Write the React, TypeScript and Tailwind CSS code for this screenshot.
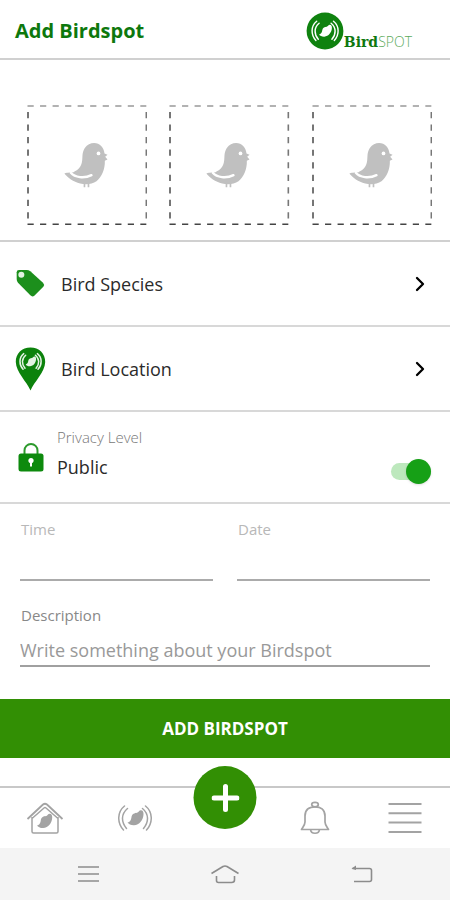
import { useState } from "react";
import type { ReactNode } from "react";
import { ChevronRight } from "lucide-react";

function Bird() {
  return (
    <>
      <path
        fill="currentColor"
        d="M1 94C4 90 18 92 28 90C40 84 52 76 54 56C56 44 53 32 62 18C69 7 79 3 90 3C107 3 119 16 121 34L130 38L123 44L130 52L122 56C123 82 112 106 97 117C84 126 66 128 48 124C28 119 10 106 1 94Z"
      />
      <path d="M20 92C32 106 60 110 82 99" fill="none" stroke="#fff" strokeWidth="7" strokeLinecap="round" />
      <path d="M61 122v13M73 122v13" fill="none" stroke="currentColor" strokeWidth="5" />
      <circle cx="103" cy="34" r="5.5" fill="#fff" />
    </>
  );
}

// simplified bird for the small icons, 16x15 grid
function SmallBird() {
  return (
    <path
      fill="currentColor"
      d="M0 12.500C3 12 3.600 9.500 4 7C4.500 3.800 7.200 3 9.500 2.700C11 2.400 11.500 .2 13.400 .2C15.400 .2 16.200 2 16 4.500C15.700 10 12 15 6.500 15.200C3.500 15.300 1.200 14.200 0 12.500Z"
    />
  );
}

// bird between two pairs of sound waves, drawn on a 34x26 grid
function BirdCall({ stroke = 1.5 }: { stroke?: number }) {
  return (
    <>
      <g fill="none" stroke="currentColor" strokeWidth={stroke} strokeLinecap="round">
        <path d="M6.500 1C-1 7-1 18 5.500 25M9.500 3.500C3 9 3 17 8.500 23.500" />
        <path d="M27.500 1C35 7 35 18 28.500 25M24.500 3.500C31 9 31 17 25.500 23.500" />
      </g>
      <g transform="translate(9.5 5)">
        <SmallBird />
      </g>
    </>
  );
}

function PhotoSlot({ index }: { index: number }) {
  return (
    <button type="button" aria-label={`Add photo ${index}`} className="aspect-square w-full">
      <svg viewBox="0 0 120 120" className="h-full w-full text-[#c0c0c0]" aria-hidden>
        <g fill="none" strokeWidth="1.6" strokeDasharray="6.2 6.3">
          <path d="M.5 1H119" stroke="#999" />
          <path d="M1 7V119" stroke="#555" />
          <path d="M119 7V119" stroke="#777" />
          <path d="M.5 119H119" stroke="#444" />
        </g>
        <g transform="translate(37 37) scale(.333)">
          <Bird />
        </g>
      </svg>
    </button>
  );
}

function LinkRow({ icon, label }: { icon: ReactNode; label: string }) {
  return (
    <button type="button" className="flex h-[85px] w-full items-center border-b-2 border-[#d8d8d8] pl-[15px] pr-[18px] text-left">
      <span className="w-[46px]">{icon}</span>
      <span className="flex-1 text-lg">{label}</span>
      <ChevronRight className="h-6 w-6 text-black" strokeWidth={2.3} aria-hidden />
    </button>
  );
}

function Field({ id, label }: { id: string; label: string }) {
  return (
    <div>
      <label htmlFor={id} className="block pl-px text-[15px] leading-5 text-[#b8b8b8]">{label}</label>
      <input id={id} type="text" className="block h-[42px] w-full border-b-2 border-[#ababab] text-lg outline-none" />
    </div>
  );
}

export default function App() {
  const [isPublic, setIsPublic] = useState(true);

  return (
    <div className="min-h-screen bg-white font-['Open_Sans',sans-serif] text-[#2b2b2b]">
      <header className="flex h-[60px] items-center justify-between border-b-2 border-[#d0d0d0] pl-[15px] pr-[38px] pt-1">
        <h1 className="text-xl font-bold text-[#0d780d]">Add Birdspot</h1>
        <div className="flex items-end">
          <svg viewBox="0 0 38 38" className="h-[38px] w-[38px] text-white" aria-hidden>
            <circle cx="19" cy="19" r="18.4" fill="#0f820f" />
            <g transform="translate(5.5 8.5) scale(.8)">
              <BirdCall stroke={1.8} />
            </g>
          </svg>
          <span className="text-sm leading-4 text-[#5cab5c]">
            <span className="font-['DejaVu_Serif',serif] font-bold text-[#0f780f]">Bird</span>
            <span className="font-light">SPOT</span>
          </span>
        </div>
      </header>

      <main>
        <section className="grid grid-cols-3 gap-[22px] border-b-2 border-[#d0d0d0] pb-[15px] pl-[27px] pr-[18px] pt-[45px]">
          {[1, 2, 3].map((n) => (
            <PhotoSlot key={n} index={n} />
          ))}
        </section>

        <LinkRow
          label="Bird Species"
          icon={
            <svg viewBox="45 42 93 87" className="h-[29px] w-[31px]" aria-hidden>
              <path fill="#1c8f1c" d="M50 52Q50 45 57 45H80Q86 45 91 49L129 83Q135 89 130 95L103 122Q97 127 91 121L54 83Q50 78 50 72Z" />
              <circle cx="64" cy="59" r="9" fill="#e3f3e3" />
            </svg>
          }
        />
        <LinkRow
          label="Bird Location"
          icon={
            <svg viewBox="0 0 31 44" className="h-[44px] w-[31px] text-[#e3f3e3]" aria-hidden>
              <path fill="#0c820c" d="M15.5 43.500C12 35 1 25 .8 15C.6 6.500 7 .5 15.500 .5S30.400 6.500 30.200 15C30 25 19 35 15.500 43.500Z" />
              <g transform="translate(4.500 6) scale(.65)">
                <BirdCall stroke={2.3} />
              </g>
            </svg>
          }
        />

        <section className="flex h-[92px] items-center border-b-2 border-[#d8d8d8] pl-[18px] pr-[19px]">
          <svg viewBox="0 0 26 30" className="mr-[13px] h-[30px] w-[26px]" aria-hidden>
            <path d="M6.500 13V8.500a6.500 6.500 0 0 1 13 0V13" fill="none" stroke="#2c9a2c" strokeWidth="2" />
            <rect x=".5" y="11.500" width="25" height="18" rx="2.500" fill="#0d8a0d" />
            <path d="M13 17.500v7" stroke="#fff" strokeWidth="2" />
            <circle cx="13" cy="18.500" r="2.600" fill="#fff" />
          </svg>
          <label htmlFor="privacy" className="flex-1 pb-1">
            <span className="block text-[15px] leading-6 font-light text-[#777]">Privacy Level</span>
            <span className="block text-lg leading-9">Public</span>
          </label>
          <input
            id="privacy"
            type="checkbox"
            role="switch"
            checked={isPublic}
            onChange={(e) => setIsPublic(e.target.checked)}
            className="relative mt-7 h-[17px] w-10 appearance-none rounded-full bg-gray-300 before:absolute before:-top-1 before:left-0 before:h-[25px] before:w-[25px] before:rounded-full before:bg-gray-400 before:shadow checked:bg-[#bde8bd] checked:before:left-[15px] checked:before:bg-[#16a016]"
          />
        </section>

        <form onSubmit={(e) => e.preventDefault()}>
          <div className="px-5 pt-[15px]">
            <div className="grid grid-cols-2 gap-6">
              <Field id="time" label="Time" />
              <Field id="date" label="Date" />
            </div>
            <label htmlFor="description" className="mt-[22px] block pl-px text-[15px] leading-6 text-[#888]">Description</label>
            <input
              id="description"
              type="text"
              placeholder="Write something about your Birdspot"
              className="block h-10 w-full border-b-2 border-[#a0a0a0] pt-2 text-lg outline-none placeholder:text-[#999]"
            />
          </div>
          <button type="submit" className="mt-8 block h-[59px] w-full bg-[#328f04] text-[17px] font-bold text-white">
            ADD BIRDSPOT
          </button>
        </form>
      </main>

      <nav className="relative mt-7 grid h-[62px] grid-cols-5 place-items-center border-t-2 border-[#c8c8c8] text-[#a3a3a3]">
        <button type="button" aria-label="Home">
          <svg viewBox="0 0 38 34" className="h-[34px] w-[38px]" aria-hidden>
            <g fill="none" stroke="currentColor" strokeWidth="1.500" strokeLinejoin="round">
              <path d="M1.500 18L17 3.500Q19 2 21 3.500L36.500 18" strokeWidth="1.800" />
              <path d="M6 16V30.500Q6 32 7.500 32H30.500Q32 32 32 30.500V16M6 17.500L18 7Q19 6.200 20 7L32 17.500" />
            </g>
            <g transform="translate(11 12.500) scale(.95)">
              <SmallBird />
            </g>
          </svg>
        </button>
        <button type="button" aria-label="Bird calls">
          <svg viewBox="0 0 34 26" className="h-[26px] w-[34px]" aria-hidden>
            <BirdCall stroke={1.5} />
          </svg>
        </button>
        <span />
        <button type="button" aria-label="Notifications">
          <svg viewBox="0 0 30 34" className="h-[34px] w-[30px]" fill="none" stroke="currentColor" strokeWidth="1.700" strokeLinejoin="round" aria-hidden>
            <ellipse cx="15" cy="3.600" rx="3.300" ry="2.300" />
            <path d="M5 21V15C5 8.500 9.500 5.800 15 5.800S25 8.500 25 15V21C25 24 27 26 28.500 28.500H1.500C3 26 5 24 5 21ZM10.500 28.500C11 33.500 19 33.500 19.500 28.500" />
          </svg>
        </button>
        <button type="button" aria-label="Menu">
          <svg viewBox="0 0 34 32" className="h-8 w-[34px]" stroke="currentColor" strokeWidth="2" aria-hidden>
            <path d="M.5 2H33.500M.5 11.300H33.500M.5 20.600H33.500M.5 30H33.500" />
          </svg>
        </button>
        <button type="button" aria-label="New birdspot" className="absolute -top-[22px] left-1/2 grid h-[63px] w-[63px] -translate-x-1/2 place-items-center rounded-full bg-[#328f04]">
          <svg viewBox="0 0 28 28" className="h-7 w-7" stroke="#fff" strokeWidth="5" strokeLinecap="round" aria-hidden>
            <path d="M14 2.500V25.500M2.500 14H25.500" />
          </svg>
        </button>
      </nav>

      <footer className="flex h-[52px] items-center justify-between bg-[#f4f4f4] px-[76px] text-[#8c8c8c]">
        <button type="button" aria-label="Recent apps">
          <svg viewBox="0 0 24 20" className="h-5 w-6" stroke="currentColor" strokeWidth="1.600" aria-hidden>
            <path d="M2 3H23M2 10H23M2 17H23" />
          </svg>
        </button>
        <button type="button" aria-label="Home screen">
          <svg viewBox="0 0 30 20" className="h-5 w-[30px]" fill="none" stroke="currentColor" strokeWidth="1.600" strokeLinejoin="round" aria-hidden>
            <path d="M1.500 9.500L13 2.500Q15 1.500 17 2.500L28.500 9.500M6.500 12V16.500Q6.500 18.500 8.500 18.500H21.500Q24.500 18.500 24.500 16V12" />
          </svg>
        </button>
        <button type="button" aria-label="Back">
          <svg viewBox="0 0 24 20" className="h-5 w-6" fill="none" stroke="currentColor" strokeWidth="1.600" aria-hidden>
            <path d="M2.500 4.500H19.500Q21.500 4.500 21.500 6.500V15.500Q21.500 17.500 19.500 17.500H4" />
            <path d="M6 1.500L1.500 4.500L6 6Z" fill="currentColor" stroke="none" />
          </svg>
        </button>
      </footer>
    </div>
  );
}
